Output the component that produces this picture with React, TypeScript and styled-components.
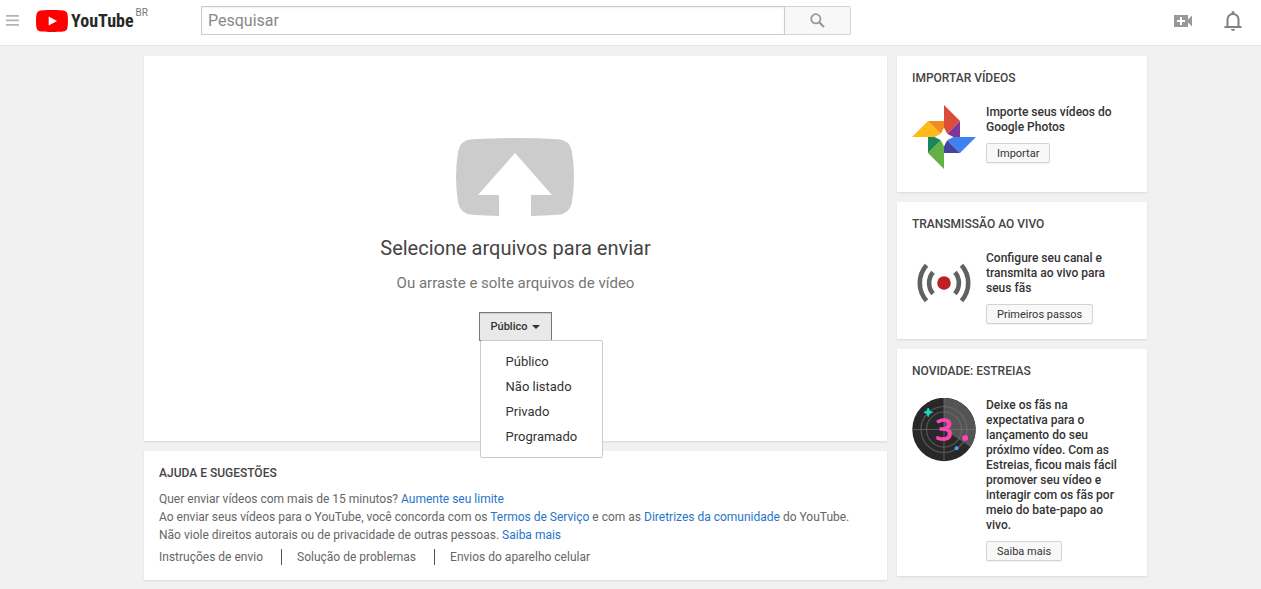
import React from 'react';
import styled, { createGlobalStyle } from 'styled-components';

const GlobalStyle = createGlobalStyle`
  *, *::before, *::after { box-sizing: border-box; }
  body {
    margin: 0;
    background: #f1f1f1;
    color: #333;
    font-family: Roboto, "Liberation Sans", Arial, sans-serif;
    font-size: 12px;
  }
  button, input { font-family: inherit; }
  h1, h2, p, ul { margin: 0; padding: 0; }
  ul { list-style: none; }
  svg { display: block; flex: none; }
`;

const Header = styled.header`
  display: flex;
  align-items: flex-start;
  background: #fff;
  border-bottom: 1px solid #e8e8e8;
  padding: 6px 16px 10px 6px;
`;

const IconButton = styled.button`
  display: flex;
  align-items: center;
  justify-content: center;
  height: 29px;
  padding: 0;
  border: 0;
  background: none;
  color: ${(p) => p.color};
`;

const Logo = styled.a`
  display: flex;
  align-items: center;
  width: 113px;
  height: 29px;
  margin-left: 16px;
  color: #282828;
  text-decoration: none;
`;

const Wordmark = styled.span`
  margin-left: 3px;
  font: 700 18px/22px "Liberation Sans Narrow", "Roboto Condensed", Roboto, sans-serif;
`;

const Country = styled.span`
  align-self: flex-start;
  margin-left: 2px;
  color: #777;
  font-size: 10px;
  line-height: 13px;
`;

const Search = styled.form`
  display: flex;
  flex: 0 1 650px;
  height: 29px;
  margin-left: 52px;
`;

const SearchInput = styled.input`
  flex: 1;
  min-width: 0;
  padding: 0 6px;
  border: 1px solid #ccc;
  box-shadow: inset 0 1px 2px #eee;
  color: #333;
  font-size: 16px;
  &::placeholder { color: #888; opacity: 1; }
`;

const SearchButton = styled.button`
  display: flex;
  align-items: center;
  justify-content: center;
  width: 67px;
  margin-left: -1px;
  padding: 0;
  border: 1px solid #d3d3d3;
  border-left-color: #ccc;
  border-radius: 0 2px 2px 0;
  background: #f8f8f8;
`;

const Actions = styled.div`
  display: flex;
  gap: 26px;
  margin-left: auto;
`;

const Page = styled.main`
  padding: 10px 0 9px 30px;
`;

const Columns = styled.div`
  display: grid;
  grid-template-columns: minmax(0, 1fr) 250px;
  gap: 10px;
  align-items: start;
  max-width: 1003px;
  margin: 0 auto;
`;

const Column = styled.div`
  display: flex;
  flex-direction: column;
  gap: 10px;
`;

const Card = styled.section`
  padding: 15px;
  background: #fff;
  box-shadow: 0 1px 2px rgba(0, 0, 0, 0.1);
`;

const UploadCard = styled(Card)`
  display: flex;
  flex-direction: column;
  align-items: center;
  padding: 82px 15px 100px;
`;

const UploadTitle = styled.h1`
  margin-top: 20px;
  color: #444;
  font-size: 20px;
  font-weight: 400;
  line-height: 24px;
`;

const UploadHint = styled.p`
  margin-top: 14px;
  color: #767676;
  font-size: 15px;
  line-height: 18px;
`;

const Privacy = styled.div`
  position: relative;
  margin-top: 20px;
`;

const PrivacyButton = styled.button`
  display: flex;
  align-items: center;
  gap: 5px;
  height: 29px;
  padding: 0 11px;
  border: 1px solid #777;
  background: #e9e9e9;
  box-shadow: inset 0 1px 0 #ccc;
  color: #333;
  font-size: 11px;
  font-weight: 500;
`;

const Menu = styled.ul`
  position: absolute;
  z-index: 1;
  top: 28px;
  left: 1px;
  width: 123px;
  padding: 8px 0;
  border: 1px solid #ccc;
  border-radius: 2px;
  background: #fff;
`;

const MenuItem = styled.li`
  padding: 0 25px;
  color: #333;
  font-size: 13px;
  line-height: 25px;
`;

const CardTitle = styled.h2`
  color: #444;
  font-size: 12px;
  font-weight: 500;
  line-height: 14px;
`;

const Promo = styled.div`
  display: flex;
  gap: 10px;
  align-items: flex-start;
  margin-top: 20px;
`;

const PromoArt = styled.div`
  flex: 0 0 64px;
  padding-bottom: 8px;
`;

const PromoText = styled.p`
  max-width: 136px;
  color: #333;
  font-weight: 500;
  line-height: 15px;
`;

const SmallButton = styled.button`
  height: 20px;
  margin-top: 8px;
  padding: 0 10px;
  border: 1px solid #d3d3d3;
  border-radius: 2px;
  background: #f8f8f8;
  box-shadow: 0 1px 0 rgba(0, 0, 0, 0.05);
  color: #333;
  font-size: 11px;
`;

const HelpText = styled.div`
  margin-top: 10px;
  color: #666;
  line-height: 18px;
`;

const Link = styled.a`
  color: #2775c7;
  text-decoration: none;
`;

const HelpLinks = styled.ul`
  display: flex;
  margin-top: 5px;
`;

const HelpLink = styled.li`
  line-height: 16px;
  & + & {
    margin-left: 18px;
    padding-left: 15px;
    border-left: 1px solid #555;
  }
  a { color: #666; text-decoration: none; }
`;

const PhotosArt = () => (
  <svg width="64" height="64" viewBox="0 0 64 64" aria-hidden="true">
    <path fill="#dd4b39" d="M32 0l16 16-16 16z" />
    <path fill="#7e3794" d="M48 16v16H32z" />
    <path fill="#4080f0" d="M64 32L48 48 32 32z" />
    <path fill="#43459d" d="M48 48H32V32z" />
    <path fill="#65b045" d="M32 64L16 48l16-16z" />
    <path fill="#17865c" d="M16 48V32h16z" />
    <path fill="#fdba18" d="M0 32l16-16 16 16z" />
    <path fill="#f28a20" d="M16 16h16v16z" />
    <path fill="#fff" d="M32 22.500L34.500 27.500Q35.200 28.800 36.500 29.500L41.500 32L36.500 34.500Q35.200 35.200 34.500 36.500L32 41.500L29.500 36.500Q28.800 35.200 27.500 34.500L22.500 32L27.500 29.500Q28.800 28.800 29.500 27.500z" />
  </svg>
);

const LiveArt = () => (
  <svg width="64" height="64" viewBox="0 0 64 64" aria-hidden="true">
    <circle cx="32" cy="32" r="6.800" fill="#bd1f26" />
    <g fill="none" stroke="#616161" strokeWidth="4.600">
      <path d="M49.500 14.200A27 27 0 0 1 49.500 49.800" />
      <path d="M43 21.200A17 17 0 0 1 43 42.800" />
      <path d="M14.500 14.200A27 27 0 0 0 14.500 49.800" />
      <path d="M21 21.200A17 17 0 0 0 21 42.800" />
    </g>
  </svg>
);

const PremiereArt = () => (
  <svg width="64" height="64" viewBox="0 0 64 64" aria-hidden="true">
    <circle cx="32" cy="31.500" r="31.700" fill="#282828" />
    <path fill="#545454" d="M32 31.500V0A31.700 31.700 0 0 1 58.400 49.100z" />
    <g fill="none" stroke="#777" strokeOpacity="0.6" strokeWidth="1.200">
      <circle cx="32" cy="31.500" r="17.500" />
      <circle cx="32" cy="31.500" r="23" />
      <path d="M32 0v63M0 31.500h64" />
    </g>
    <text
      x="32"
      y="42"
      fill="#ff45b5"
      stroke="#ff45b5"
      strokeWidth="1.500"
      strokeLinejoin="round"
      textAnchor="middle"
      fontFamily="'Open Sans', sans-serif"
      fontSize="30"
      fontWeight="400"
    >
      3
    </text>
    <path
      fill="#12e0bd"
      stroke="#12e0bd"
      strokeLinejoin="round"
      d="M16.200 10L17.400 13.100L20.500 14.300L17.400 15.500L16.200 18.600L15 15.500L11.900 14.300L15 13.100z"
    />
    <circle cx="53.200" cy="40" r="3" fill="#ff45b5" />
    <circle cx="44.600" cy="50.200" r="2" fill="#3ea6ff" />
  </svg>
);

const promos = [
  { title: 'IMPORTAR VÍDEOS', text: 'Importe seus vídeos do Google Photos', action: 'Importar', Art: PhotosArt },
  { title: 'TRANSMISSÃO AO VIVO', text: 'Configure seu canal e transmita ao vivo para seus fãs', action: 'Primeiros passos', Art: LiveArt },
  {
    title: 'NOVIDADE: ESTREIAS',
    text: 'Deixe os fãs na expectativa para o lançamento do seu próximo vídeo. Com as Estreias, ficou mais fácil promover seu vídeo e interagir com os fãs por meio do bate-papo ao vivo.',
    action: 'Saiba mais',
    Art: PremiereArt,
  },
];

const options = ['Público', 'Não listado', 'Privado', 'Programado'];
const helpLinks = ['Instruções de envio', 'Solução de problemas', 'Envios do aparelho celular'];

export default function App() {
  return (
    <>
      <GlobalStyle />
      <Header>
        <IconButton type="button" color="#b4b4b4" aria-label="Guia">
          <svg width="14" height="11" viewBox="0 0 14 11" fill="currentColor">
            <path d="M0 0h13v1.700H0zM0 4.500h13v1.700H0zM0 9h13v1.700H0z" />
          </svg>
        </IconButton>
        <Logo href="#" aria-label="YouTube BR">
          <svg width="32" height="22" viewBox="0 0 32 22">
            <path fill="#f00" d="M31.300 3.500A4 4 0 0 0 28.500.7C26 0 16 0 16 0S6 0 3.500.7A4 4 0 0 0 .7 3.500C0 6 0 11 0 11s0 5 .7 7.500a4 4 0 0 0 2.800 2.800C6 22 16 22 16 22s10 0 12.500-.7a4 4 0 0 0 2.800-2.800C32 16 32 11 32 11s0-5-.7-7.500z" />
            <path fill="#fff" d="M12.700 6.500v9l8.300-4.500z" />
          </svg>
          <Wordmark>YouTube</Wordmark>
          <Country>BR</Country>
        </Logo>
        <Search onSubmit={(e) => e.preventDefault()}>
          <SearchInput type="text" placeholder="Pesquisar" aria-label="Pesquisar" />
          <SearchButton type="submit" aria-label="Pesquisar">
            <svg width="15" height="15" viewBox="0 0 15 15" fill="none" stroke="#999" strokeWidth="1.800">
              <circle cx="5.800" cy="5.800" r="4.600" />
              <path d="M9 9l5 5" strokeWidth="2.200" />
            </svg>
          </SearchButton>
        </Search>
        <Actions>
          <IconButton type="button" color="#999" aria-label="Criar">
            <svg width="24" height="24" viewBox="0 0 24 24" fill="currentColor">
              <path d="M17 10.500V6H3v12h14v-4.500l4 4v-11l-4 4zM14 13h-3v3H9v-3H6v-2h3V8h2v3h3v2z" />
            </svg>
          </IconButton>
          <IconButton type="button" color="#808080" aria-label="Notificações">
            <svg width="24" height="24" viewBox="0 0 24 24" fill="currentColor">
              <path d="M10 20h4a2 2 0 0 1-4 0zM20.500 17v2h-17v-2H5.500V10.500c0-3.100 2-5.600 5-6.300V3.500a1.500 1.500 0 0 1 3 0v.7c3 .7 5 3.200 5 6.300V17zM16.500 17v-6.500c0-2.500-1.900-4.500-4.500-4.500s-4.500 2-4.500 4.500V17z" />
            </svg>
          </IconButton>
        </Actions>
      </Header>
      <Page>
        <Columns>
          <Column>
            <UploadCard>
              <svg width="119" height="78" viewBox="0 0 119 78" aria-hidden="true">
                <path fill="#ccc" d="M16 1.300Q59-1.300 102 1.300Q113.500 2 115.800 13Q120.200 39 115.800 65Q113.500 76 102 76.700Q88.500 77.700 75 78V57H96L59 15 22 57H43V78Q29.500 77.700 16 76.700Q4.500 76 2.200 65Q-2.200 39 2.200 13Q4.500 2 16 1.300z" />
              </svg>
              <UploadTitle>Selecione arquivos para enviar</UploadTitle>
              <UploadHint>Ou arraste e solte arquivos de vídeo</UploadHint>
              <Privacy>
                <PrivacyButton type="button" aria-haspopup="listbox" aria-expanded="true">
                  Público
                  <svg width="8" height="4" viewBox="0 0 8 4" fill="#333">
                    <path d="M0 0h8L4 4z" />
                  </svg>
                </PrivacyButton>
                <Menu role="listbox" aria-label="Privacidade">
                  {options.map((o, i) => (
                    <MenuItem key={o} role="option" aria-selected={i === 0}>{o}</MenuItem>
                  ))}
                </Menu>
              </Privacy>
            </UploadCard>
            <Card>
              <CardTitle>AJUDA E SUGESTÕES</CardTitle>
              <HelpText>
                <p>Quer enviar vídeos com mais de 15 minutos? <Link href="#">Aumente seu limite</Link></p>
                <p>
                  Ao enviar seus vídeos para o YouTube, você concorda com os <Link href="#">Termos de Serviço</Link> e com as{' '}
                  <Link href="#">Diretrizes da comunidade</Link> do YouTube.
                </p>
                <p>Não viole direitos autorais ou de privacidade de outras pessoas. <Link href="#">Saiba mais</Link></p>
              </HelpText>
              <HelpLinks>
                {helpLinks.map((l) => (
                  <HelpLink key={l}><a href="#">{l}</a></HelpLink>
                ))}
              </HelpLinks>
            </Card>
          </Column>
          <Column>
            {promos.map(({ title, text, action, Art }) => (
              <Card key={title}>
                <CardTitle>{title}</CardTitle>
                <Promo>
                  <PromoArt><Art /></PromoArt>
                  <div>
                    <PromoText>{text}</PromoText>
                    <SmallButton type="button">{action}</SmallButton>
                  </div>
                </Promo>
              </Card>
            ))}
          </Column>
        </Columns>
      </Page>
    </>
  );
}
